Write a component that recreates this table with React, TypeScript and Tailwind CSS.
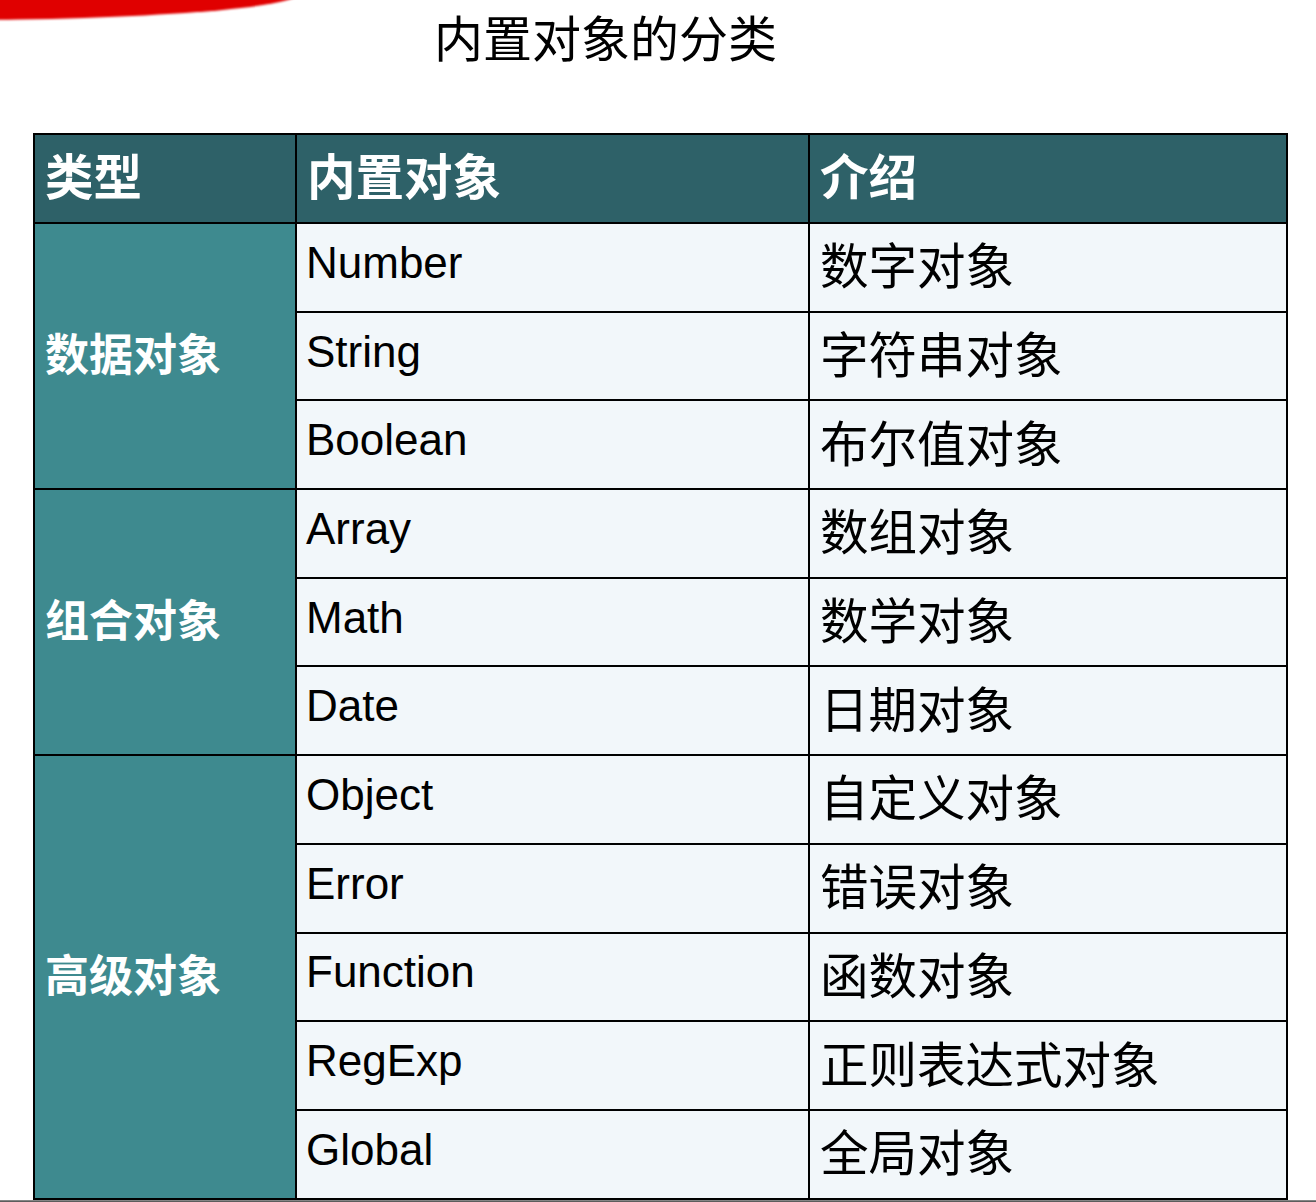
import React from 'react';

interface Group {
  label: string;
  items: { name: string; desc: string }[];
}

const groups: Group[] = [
  {
    label: '数据对象',
    items: [
      { name: 'Number', desc: '数字对象' },
      { name: 'String', desc: '字符串对象' },
      { name: 'Boolean', desc: '布尔值对象' },
    ],
  },
  {
    label: '组合对象',
    items: [
      { name: 'Array', desc: '数组对象' },
      { name: 'Math', desc: '数学对象' },
      { name: 'Date', desc: '日期对象' },
    ],
  },
  {
    label: '高级对象',
    items: [
      { name: 'Object', desc: '自定义对象' },
      { name: 'Error', desc: '错误对象' },
      { name: 'Function', desc: '函数对象' },
      { name: 'RegExp', desc: '正则表达式对象' },
      { name: 'Global', desc: '全局对象' },
    ],
  },
];

const spans: Record<number, string> = {
  3: 'row-span-3',
  5: 'row-span-5',
};

export default function App() {
  return (
    <div
      className="relative w-[1316px] h-[1202px] overflow-hidden bg-white flex flex-col"
      style={{ fontFamily: '"Liberation Sans", "Noto Sans CJK SC", sans-serif' }}
    >
      {/* red arc in the corner */}
      <div className="absolute -left-[400px] -top-[34px] w-[700px] h-[54px] rounded-[50%] bg-[#e00000] blur-[1px]" />

      <h1 className="pt-[12px] pl-[434px] text-[49px] leading-[56px] text-black font-normal">
        内置对象的分类
      </h1>

      <div className="mt-[65px] ml-[33px] w-[1255px] grid grid-cols-[260px_511px_476px] grid-rows-[87px_repeat(11,86.7px)] gap-[2px] p-[2px] bg-black">
        {/* header */}
        <div className="bg-[#2e6168] text-white font-bold text-[48.5px] flex items-center pl-[10px]">类型</div>
        <div className="bg-[#2e6168] text-white font-bold text-[48.5px] flex items-center pl-[10px]">内置对象</div>
        <div className="bg-[#2e6168] text-white font-bold text-[48.5px] flex items-center pl-[10px]">介绍</div>

        {groups.map((g) => (
          <React.Fragment key={g.label}>
            <div
              className={`${spans[g.items.length]} bg-[#3e8a8f] text-white font-bold text-[44px] flex items-center pl-[10px]`}
            >
              {g.label}
            </div>
            {g.items.map((item, i) => (
              <React.Fragment key={item.name}>
                <div
                  className={`${i === 0 ? 'col-start-2' : ''} bg-[#f2f7fa] text-black text-[44px] leading-[44px] flex items-center pl-[9px] pb-[9px]`}
                >
                  {item.name}
                </div>
                <div className="bg-[#f2f7fa] text-black text-[48.5px] leading-[50px] flex items-center pl-[10px]">
                  {item.desc}
                </div>
              </React.Fragment>
            ))}
          </React.Fragment>
        ))}
      </div>

      <div className="mt-auto h-[5px] bg-gradient-to-b from-[#9a9a9a] to-[#4a4a4a]" />
    </div>
  );
}
